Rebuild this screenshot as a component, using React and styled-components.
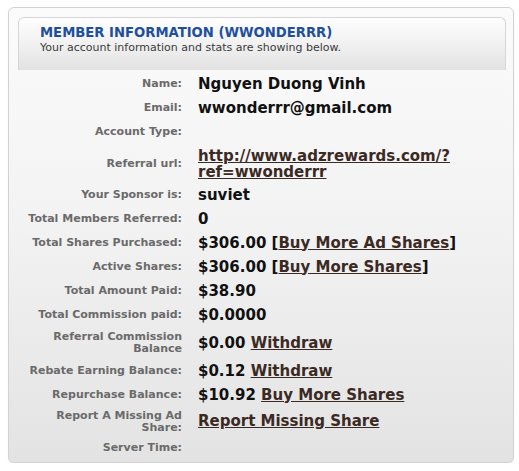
import React from 'react';
import styled, { createGlobalStyle } from 'styled-components';

const GlobalStyle = createGlobalStyle`
  body {
    margin: 0;
    background: #ffffff;
    font-family: Verdana, "DejaVu Sans", sans-serif;
  }
`;

const Panel = styled.div`
  box-sizing: border-box;
  width: 506px;
  height: 456px;
  margin: 7px 0 0 8px;
  border: 1px solid #d2d2d2;
  border-radius: 6px;
  background: linear-gradient(to bottom, #fbfbfb 0%, #f3f3f3 45%, #e3e3e3 100%);
  box-shadow: 0 1px 1px rgba(0, 0, 0, 0.12);
`;

const Header = styled.div`
  box-sizing: border-box;
  height: 53px;
  margin: 9px 7px 0 9px;
  padding: 7px 0 0 21px;
  border: 1px solid #d6d6d6;
  border-bottom: none;
  border-radius: 6px 6px 0 0;
  background: linear-gradient(to bottom, #fefefe 0%, #f1f1f1 50%, #e2e2e2 100%);
`;

const Title = styled.h2`
  margin: 0;
  font-size: 13.2px;
  line-height: 16px;
  font-weight: bold;
  color: #1d4f9c;
`;

const Subtitle = styled.p`
  margin: 0;
  font-size: 11px;
  line-height: 14px;
  color: #3a3a3a;
`;

const Table = styled.div`
  display: grid;
  grid-template-columns: 172px 1fr;
  margin: 2px 0 0 9px;
`;

const Label = styled.div`
  display: flex;
  align-items: center;
  justify-content: flex-end;
  min-height: ${p => p.$h || 24}px;
  padding-right: 8px;
  text-align: right;
  font-size: 11px;
  line-height: 12px;
  font-weight: bold;
  color: #6a6a6a;
`;

const Value = styled.div`
  display: flex;
  align-items: center;
  min-height: ${p => p.$h || 24}px;
  padding-left: 8px;
  font-size: 15px;
  line-height: 15px;
  font-weight: bold;
  color: #111111;
`;

const Line = styled.span`
  white-space: pre;
`;

const Link = styled.a`
  color: #3b2a24;
  text-decoration: underline;
  cursor: pointer;
`;

const UrlLink = styled(Link)`
  display: block;
  line-height: 16px;
`;

const rows = [
  { label: 'Name:', value: 'Nguyen Duong Vinh' },
  { label: 'Email:', value: 'wwonderrr@gmail.com' },
  { label: 'Account Type:', value: '' },
  {
    label: 'Referral url:',
    h: 39,
    value: (
      <UrlLink>
        http://www.adzrewards.com/?
        <br />
        ref=wwonderrr
      </UrlLink>
    ),
  },
  { label: 'Your Sponsor is:', value: 'suviet' },
  { label: 'Total Members Referred:', value: '0' },
  {
    label: 'Total Shares Purchased:',
    value: (
      <Line>
        $306.00 [<Link>Buy More Ad Shares</Link>]
      </Line>
    ),
  },
  {
    label: 'Active Shares:',
    value: (
      <Line>
        $306.00 [<Link>Buy More Shares</Link>]
      </Line>
    ),
  },
  { label: 'Total Amount Paid:', value: '$38.90' },
  { label: 'Total Commission paid:', value: '$0.0000' },
  {
    label: (
      <>
        Referral Commission
        <br />
        Balance
      </>
    ),
    h: 32,
    value: (
      <Line>
        $0.00 <Link>Withdraw</Link>
      </Line>
    ),
  },
  {
    label: 'Rebate Earning Balance:',
    value: (
      <Line>
        $0.12 <Link>Withdraw</Link>
      </Line>
    ),
  },
  {
    label: 'Repurchase Balance:',
    value: (
      <Line>
        $10.92 <Link>Buy More Shares</Link>
      </Line>
    ),
  },
  {
    label: (
      <>
        Report A Missing Ad
        <br />
        Share:
      </>
    ),
    h: 29,
    value: <Link>Report Missing Share</Link>,
  },
  { label: 'Server Time:', value: '' },
];

const App = () => {
  return (
    <>
      <GlobalStyle />
      <Panel>
        <Header>
          <Title>MEMBER INFORMATION (WWONDERRR)</Title>
          <Subtitle>Your account information and stats are showing below.</Subtitle>
        </Header>
        <Table>
          {rows.map((row, i) => (
            <React.Fragment key={i}>
              <Label $h={row.h}>
                <span>{row.label}</span>
              </Label>
              <Value $h={row.h}>
                <div>{row.value}</div>
              </Value>
            </React.Fragment>
          ))}
        </Table>
      </Panel>
    </>
  );
};

export default App;
